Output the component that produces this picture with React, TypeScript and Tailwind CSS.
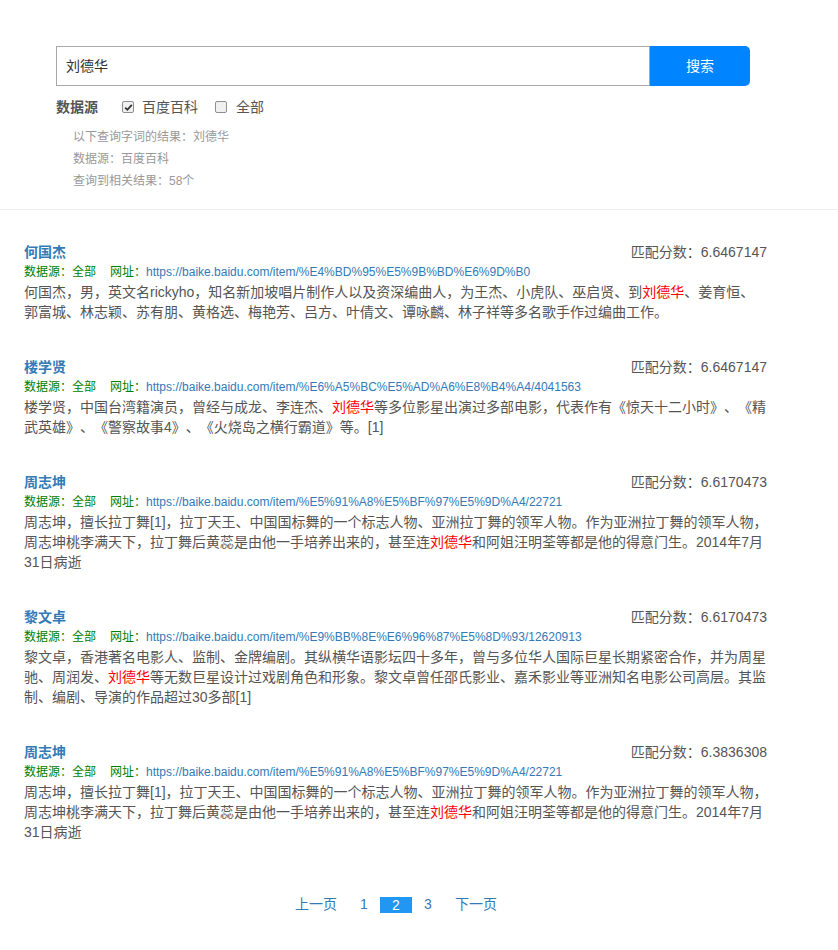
import React from "react";

type Result = {
    name: string;
    score: string;
    url: string;
    before: string;
    after: string;
};

const results: Result[] = [
    {
        name: "何国杰",
        score: "6.6467147",
        url: "https://baike.baidu.com/item/%E4%BD%95%E5%9B%BD%E6%9D%B0",
        before: "何国杰，男，英文名rickyho，知名新加坡唱片制作人以及资深编曲人，为王杰、小虎队、巫启贤、到",
        after: "、姜育恒、郭富城、林志颖、苏有朋、黄格选、梅艳芳、吕方、叶倩文、谭咏麟、林子祥等多名歌手作过编曲工作。",
    },
    {
        name: "楼学贤",
        score: "6.6467147",
        url: "https://baike.baidu.com/item/%E6%A5%BC%E5%AD%A6%E8%B4%A4/4041563",
        before: "楼学贤，中国台湾籍演员，曾经与成龙、李连杰、",
        after: "等多位影星出演过多部电影，代表作有《惊天十二小时》、《精武英雄》、《警察故事4》、《火烧岛之横行霸道》等。[1]",
    },
    {
        name: "周志坤",
        score: "6.6170473",
        url: "https://baike.baidu.com/item/%E5%91%A8%E5%BF%97%E5%9D%A4/22721",
        before: "周志坤，擅长拉丁舞[1]，拉丁天王、中国国标舞的一个标志人物、亚洲拉丁舞的领军人物。作为亚洲拉丁舞的领军人物，周志坤桃李满天下，拉丁舞后黄蕊是由他一手培养出来的，甚至连",
        after: "和阿姐汪明荃等都是他的得意门生。2014年7月31日病逝",
    },
    {
        name: "黎文卓",
        score: "6.6170473",
        url: "https://baike.baidu.com/item/%E9%BB%8E%E6%96%87%E5%8D%93/12620913",
        before: "黎文卓，香港著名电影人、监制、金牌编剧。其纵横华语影坛四十多年，曾与多位华人国际巨星长期紧密合作，并为周星驰、周润发、",
        after: "等无数巨星设计过戏剧角色和形象。黎文卓曾任邵氏影业、嘉禾影业等亚洲知名电影公司高层。其监制、编剧、导演的作品超过30多部[1]",
    },
    {
        name: "周志坤",
        score: "6.3836308",
        url: "https://baike.baidu.com/item/%E5%91%A8%E5%BF%97%E5%9D%A4/22721",
        before: "周志坤，擅长拉丁舞[1]，拉丁天王、中国国标舞的一个标志人物、亚洲拉丁舞的领军人物。作为亚洲拉丁舞的领军人物，周志坤桃李满天下，拉丁舞后黄蕊是由他一手培养出来的，甚至连",
        after: "和阿姐汪明荃等都是他的得意门生。2014年7月31日病逝",
    },
];

const Box = ({ checked }: { checked?: boolean }) => (
    <span className="w-[12px] h-[12px] rounded-[2px] border border-[#8f8f8f] bg-[#f0f0f0] flex items-center justify-center">
        {checked && (
            <svg width="9" height="9" viewBox="0 0 9 9">
                <path d="M1.2 4.6 L3.4 6.8 L7.8 1.8" fill="none" stroke="#333" strokeWidth="1.8" />
            </svg>
        )}
    </span>
);

const ResultItem = ({ r }: { r: Result }) => (
    <div className="mb-[35px]">
        <div className="flex items-center justify-between h-[20px]">
            <a className="text-[14px] font-bold text-[#337ab7]">{r.name}</a>
            <span className="text-[14px] text-[#555] pr-[1px]">匹配分数：{r.score}</span>
        </div>
        <div className="flex items-center h-[20px] text-[12px]">
            <span className="text-[#008000]">数据源：全部</span>
            <span className="text-[#008000] ml-[14px]">网址：</span>
            <a className="text-[#337ab7]">{r.url}</a>
        </div>
        <p className="text-[14px] leading-[20px] text-[#555] [text-spacing-trim:space-all]">
            {r.before}
            <span className="text-[#ff0000]">刘德华</span>
            {r.after}
        </p>
    </div>
);

const App: React.FC = () => {
    return (
        <div
            className="w-[838px] min-h-[950px] bg-white text-[#333]"
            style={{ fontFamily: '"Liberation Sans", "Noto Sans CJK SC", sans-serif' }}
        >
            <div className="pt-[46px] pl-[56px]">
                <div className="flex w-[694px] h-[40px]">
                    <div className="flex-1 border border-[#a9a9a9] flex items-center pl-[9px] text-[14px] text-[#333]">
                        刘德华
                    </div>
                    <button className="w-[100px] bg-[#0084ff] text-white text-[14px] rounded-r-[5px]">
                        搜索
                    </button>
                </div>
                <div className="flex items-center h-[22px] mt-[10px] text-[14px] text-[#555]">
                    <span className="font-bold w-[66px]">数据源</span>
                    <Box checked />
                    <span className="ml-[8px]">百度百科</span>
                    <span className="ml-[17px]"><Box /></span>
                    <span className="ml-[9px]">全部</span>
                </div>
                <div className="pl-[17px] pt-[8px] text-[12px] text-[#999] leading-[22px]">
                    <div>以下查询字词的结果：刘德华</div>
                    <div>数据源：百度百科</div>
                    <div>查询到相关结果：58个</div>
                </div>
            </div>
            <div className="mt-[17px] border-t border-[#eee]" />
            <div className="w-[744px] ml-[24px] pt-[32px]">
                {results.map((r, i) => (
                    <ResultItem key={i} r={r} />
                ))}
                <div className="flex justify-center items-center text-[14px] text-[#337ab7] mt-[52px]">
                    <a className="px-[11px]">上一页</a>
                    <a className="w-[32px] text-center">1</a>
                    <a className="w-[32px] h-[16px] leading-[16px] text-center bg-[#2196f3] text-white">2</a>
                    <a className="w-[32px] text-center">3</a>
                    <a className="px-[11px]">下一页</a>
                </div>
            </div>
        </div>
    );
};

export default App;
